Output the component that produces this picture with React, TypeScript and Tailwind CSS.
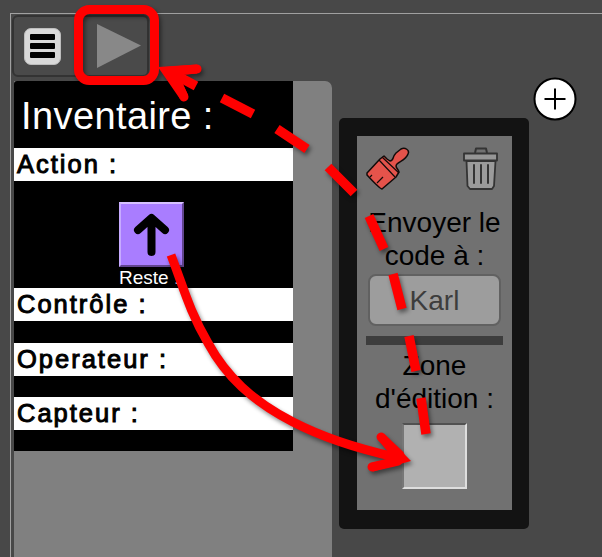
function MenuIcon() {
  return (
    <div className="flex h-[37px] w-[37px] flex-col items-center justify-center gap-[3px] rounded-[7px] border border-[#bdbdbd] bg-[#d9d9d9]">
      <span className="h-[6px] w-[25px] rounded-[1px] bg-black" />
      <span className="h-[6px] w-[25px] rounded-[1px] bg-black" />
      <span className="h-[6px] w-[25px] rounded-[1px] bg-black" />
    </div>
  );
}

function Toolbar() {
  return (
    <div className="ml-px mt-px flex h-[62px] w-[137px] items-center rounded-[6px] border-2 border-[#333333] bg-[#4a4a4a] pl-[10px]">
      <MenuIcon />
      <svg className="ml-[36px]" width="44" height="46" viewBox="0 0 44 46">
        <path d="M0 1L44 22.500L0 45Z" fill="#888888" />
      </svg>
    </div>
  );
}

function Section({ title }: { title: string }) {
  return (
    <div className="h-[33px] w-full bg-white pl-[3px] text-[25.5px] leading-[33px] tracking-[2px] whitespace-nowrap text-black [-webkit-text-stroke:1px_#000]">
      {title}
    </div>
  );
}

function Inventory() {
  return (
    <div className="ml-[3px] mt-[4px] h-[477px] w-[318px] rounded-tr-[7px] bg-[#808080]">
      <div className="flex h-[370px] w-[279px] flex-col rounded-tl-[3px] bg-black">
        <div className="h-[67px] pl-[7px] pt-[14px] text-[38px] leading-[42px] tracking-[0.4px] whitespace-nowrap text-white">
          Inventaire :
        </div>
        <Section title="Action :" />
        <div className="flex h-[107px] flex-col pl-[105px] pt-[21px]">
          <div className="flex h-[65px] w-[65px] items-center justify-center border-2 border-t-[#d6c0ff] border-r-[#62458f] border-b-[#62458f] border-l-[#c7abff] bg-[#a97dff]">
            <svg width="37" height="46" viewBox="0 0 37 46" fill="none" stroke="#000" strokeWidth="8" strokeLinecap="round" strokeLinejoin="round">
              <path d="M5 18L18.500 6L32 18M18.500 7V40" />
            </svg>
          </div>
          <div className="h-[20px] text-[19px] leading-[22px] whitespace-nowrap text-white">Reste :</div>
        </div>
        <Section title="Contrôle :" />
        <div className="h-[22px]" />
        <Section title="Operateur :" />
        <div className="h-[21px]" />
        <Section title="Capteur :" />
      </div>
    </div>
  );
}

function BrushIcon() {
  return (
    <svg width="44" height="43" viewBox="366 147 44 43" stroke="#120b0a" strokeWidth="1.500" strokeLinejoin="round">
      <path
        d="M367 173L380 159L384 156L387 159L390 161C394 161 392 157 396 153L401 149C405 147 410 150 408 154C406 160 400 161 397 164C394 167 398 168 399 172L396 177L382 189Q380 189 367 175Z"
        fill="#e5534b"
      />
      <path d="M379 160L395 177M382 157L399 173M377 183L383 177M370 177L372 175" fill="none" strokeWidth="1.200" />
    </svg>
  );
}

function TrashIcon() {
  return (
    <svg width="36" height="44" viewBox="463 147 36 44" fill="none" stroke="#343434" strokeWidth="1.800" strokeLinejoin="round">
      <path d="M475 153L476 148.500H486L487 153" strokeWidth="2" />
      <path d="M466.500 161H495.500L494 186L492 189H470L467.500 186Z" fill="#9b9b9b" />
      <path d="M464 153.500H497V160.500H464Z" fill="#969696" />
      <path d="M474 165V183M481 165V183M488 165V183" strokeWidth="2" strokeLinecap="round" />
    </svg>
  );
}

function Editor() {
  return (
    <div className="ml-[7px] mt-[104px] h-[411px] w-[190px] rounded-[5px] bg-[#131313] p-[18px]">
      <div className="flex h-[374px] w-[155px] flex-col items-center bg-[#717171] text-center text-[28px] leading-[32.5px] whitespace-nowrap text-black">
        <div className="flex h-[71px] w-full justify-between pl-[9px] pr-[13px] pt-[11px]">
          <BrushIcon />
          <TrashIcon />
        </div>
        <div className="h-[67px]">
          Envoyer le
          <br />
          code à :
        </div>
        <div className="h-[52px] w-[133px] rounded-[8px] border-2 border-[#616161] bg-[#9d9d9d] leading-[49px] text-[#3d3d3d]">
          Karl
        </div>
        <div className="mt-[10px] h-[9px] w-[137px] bg-[#3d3d3d]" />
        <div className="mt-[5px] h-[73px]">
          Zone
          <br />
          d'édition :
        </div>
        <div className="h-[66px] w-[65px] border-2 border-t-[#515151] border-r-[#dedede] border-b-[#dedede] border-l-[#777777] bg-[#b1b1b1]" />
      </div>
    </div>
  );
}

function Annotations() {
  return (
    <svg className="pointer-events-none absolute inset-0" width="602" height="557" viewBox="0 0 602 557" fill="none">
      <g stroke="#ff0000" strokeWidth="9" style={{ filter: "drop-shadow(2px 3px 2px rgba(0,0,0,0.45))" }}>
        <rect x="78.500" y="9.500" width="76" height="71" rx="11" />
        <path d="M171 255C184 289 189 310 208 343C226 376 252 401 293 422C322 437 355 448 395 457" />
        <path d="M381 437L400 455M372 467L398 461" strokeLinecap="round" />
        <path d="M384 433.500L411 461L373 471.500L371 463L388 459.500L389 453L378 440Z" fill="#ff0000" stroke="none" />
        <path d="M168 71L196 86M222 98L253 114M277 129L307 149M328 167L354 193M369 216L384 249M393 274L402 309M409 336L416 371M421 398L426 434" strokeWidth="9.500" />
        <path d="M197 69L172 71L184 97" strokeLinecap="round" />
        <path d="M158 67L197 64.500V73.500L181 75L180 78L188 95L180 99Z" fill="#ff0000" stroke="none" />
      </g>
    </svg>
  );
}

export default function App() {
  return (
    <div className="relative h-[557px] w-[602px] overflow-hidden bg-[#484848] pl-[10px] pt-[13px] font-['Liberation_Sans',Arial,sans-serif]">
      <div className="flex h-[544px] w-[592px] border-t border-l border-[#a0a0a0]">
        <div className="w-[321px] shrink-0">
          <Toolbar />
          <Inventory />
        </div>
        <Editor />
        <svg className="ml-[4px] mt-[63px] shrink-0" width="44" height="44" viewBox="0 0 44 44">
          <circle cx="22" cy="22" r="20.500" fill="#fff" stroke="#000" strokeWidth="2" />
          <path d="M11.500 22H32.500M22 11.500V32.500" stroke="#000" strokeWidth="2" />
        </svg>
      </div>
      <Annotations />
    </div>
  );
}
